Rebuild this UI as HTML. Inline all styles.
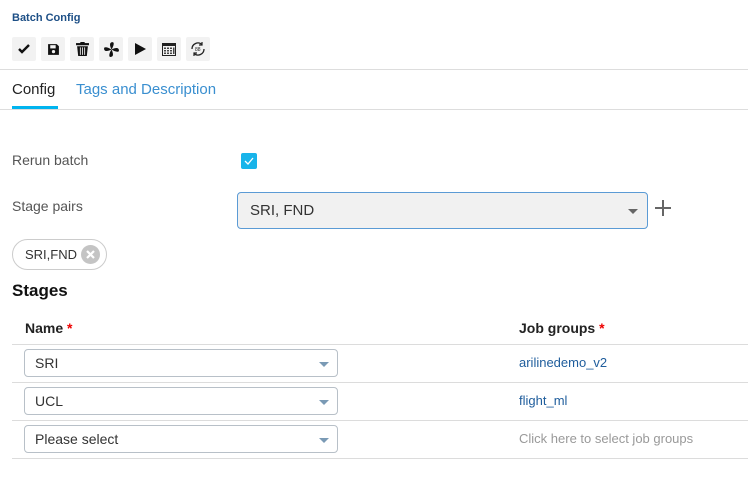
<!DOCTYPE html>
<html><head><meta charset="utf-8"><style>
*{box-sizing:border-box;margin:0;padding:0}
body{width:748px;height:478px;background:#fff;font-family:"Liberation Sans",sans-serif;position:relative;overflow:hidden;color:#333}
.a{position:absolute}
.btn{position:absolute;top:37px;width:24px;height:24px;background:#f2f2f2;border-radius:2px;display:flex;align-items:center;justify-content:center}
.hl{position:absolute;left:12px;right:0;height:1px;background:#dcdcdc}
.sel{position:absolute;left:24px;width:314px;height:28px;border:1px solid #b8c0c8;border-radius:4px;font-size:14px;padding-left:10px;line-height:26px;color:#333}
.sel:after{content:"";position:absolute;right:8px;top:12px;border-left:5px solid transparent;border-right:5px solid transparent;border-top:5px solid #7a9ab5}
.jg{position:absolute;left:519px;font-size:13px;color:#1f5d9c}
</style></head><body>
<div class="a" style="left:12px;top:12px;font-size:11px;font-weight:bold;color:#1d4f86">Batch Config</div>
<div class="btn" style="left:12px"><svg width="14" height="14" viewBox="0 0 14 14"><path d="M2 7l3 3 7-7" stroke="#111" stroke-width="2.4" fill="none"/></svg></div>
<div class="btn" style="left:41px"><svg width="13" height="13" viewBox="0 0 12 12"><path d="M1 1h8l2 2v8H1z" fill="#111"/><rect x="3" y="2" width="5" height="3" fill="#f2f2f2"/><circle cx="6" cy="8" r="1.5" fill="#f2f2f2"/></svg></div>
<div class="btn" style="left:70px"><svg width="13" height="14" viewBox="0 0 12 13"><rect x="0" y="1" width="12" height="2" fill="#111"/><rect x="4" y="0" width="4" height="2" fill="#111"/><path d="M1 4h10l-1 9H2z" fill="#111"/><path d="M4 5v7M6 5v7M8 5v7" stroke="#f2f2f2" stroke-width=".8"/></svg></div>
<div class="btn" style="left:99px"><svg width="17" height="17" viewBox="0 0 16 16"><g fill="#111"><path d="M8 8C6 4 6 1 9 1c2 0 1 4-1 7z"/><path d="M8 8c4-2 7-2 7 1 0 2-4 1-7-1z"/><path d="M8 8c2 4 2 7-1 7-2 0-1-4 1-7z"/><path d="M8 8C4 10 1 10 1 7c0-2 4-1 7 1z"/></g></svg></div>
<div class="btn" style="left:128px"><svg width="14" height="14" viewBox="0 0 14 14"><path d="M2 1l11 6-11 6z" fill="#111"/></svg></div>
<div class="btn" style="left:157px"><svg width="16" height="16" viewBox="0 0 16 16"><rect x="1.5" y="2.5" width="13" height="12" fill="none" stroke="#222"/><rect x="1.5" y="2.5" width="13" height="2.5" fill="#222"/><g fill="#444"><rect x="3" y="6.5" width="2" height="1.5"/><rect x="6" y="6.5" width="2" height="1.5"/><rect x="9" y="6.5" width="2" height="1.5"/><rect x="3" y="9" width="2" height="1.5"/><rect x="6" y="9" width="2" height="1.5"/><rect x="9" y="9" width="2" height="1.5"/><rect x="3" y="11.5" width="2" height="1.5"/><rect x="6" y="11.5" width="2" height="1.5"/><rect x="9" y="11.5" width="2" height="1.5"/><rect x="12" y="6.5" width="1.5" height="6.5"/></g></svg></div>
<div class="btn" style="left:186px"><svg width="18" height="18" viewBox="0 0 18 18"><path d="M3 9a6 6 0 0 1 10-4.5M15 9a6 6 0 0 1-10 4.5" stroke="#222" stroke-width="1.3" fill="none"/><path d="M13 2v3h-3M5 16v-3h3" stroke="#222" stroke-width="1.2" fill="none"/><text x="6" y="11" font-size="5" font-family="Liberation Sans" fill="#222">88</text></svg></div>
<div class="a" style="left:0;right:0;top:69px;height:1px;background:#ddd"></div>
<div class="a" style="left:12px;top:81px;font-size:15px;color:#222">Config</div>
<div class="a" style="left:76px;top:81px;font-size:15px;color:#3a8fd0">Tags and Description</div>
<div class="a" style="left:12px;top:106px;width:46px;height:3px;background:#00b4ef"></div>
<div class="a" style="left:0;right:0;top:109px;height:1px;background:#ddd"></div>
<div class="a" style="left:12px;top:152px;font-size:14px;color:#555">Rerun batch</div>
<div class="a" style="left:241px;top:153px;width:16px;height:16px;background:#18b4ea;border-radius:2px"><svg width="16" height="16" viewBox="0 0 16 16"><path d="M4 8l3 3 5-6" stroke="#fff" stroke-width="1.3" fill="none"/></svg></div>
<div class="a" style="left:12px;top:198px;font-size:14px;color:#555">Stage pairs</div>
<div class="a" style="left:237px;top:192px;width:411px;height:37px;background:#f1f1f1;border:1px solid #5b9bd5;border-radius:4px;font-size:15px;color:#333;padding-left:12px;line-height:35px">SRI, FND<span style="position:absolute;right:9px;top:16px;border-left:5px solid transparent;border-right:5px solid transparent;border-top:5px solid #666"></span></div>
<div class="a" style="left:655px;top:207px;width:16px;height:2px;background:#666"></div>
<div class="a" style="left:662px;top:200px;width:2px;height:16px;background:#666"></div>
<div class="a" style="left:12px;top:239px;width:95px;height:31px;border:1px solid #ccc;border-radius:16px;font-size:13px;padding-left:12px;line-height:29px;color:#333">SRI,FND<span style="position:absolute;left:68px;top:5px;width:19px;height:19px;border-radius:50%;background:#c4c4c4"><svg width="19" height="19" viewBox="0 0 19 19"><path d="M6 6l7 7M13 6l-7 7" stroke="#fff" stroke-width="2.2"/></svg></span></div>
<div class="a" style="left:12px;top:281px;font-size:17px;font-weight:bold;color:#111">Stages</div>
<div class="a" style="left:25px;top:320px;font-size:14px;font-weight:bold;color:#222">Name <span style="color:#e00">*</span></div>
<div class="a" style="left:519px;top:320px;font-size:14px;font-weight:bold;color:#222">Job groups <span style="color:#e00">*</span></div>
<div class="hl" style="top:344px"></div>
<div class="hl" style="top:382px"></div>
<div class="hl" style="top:420px"></div>
<div class="hl" style="top:458px"></div>
<div class="sel" style="top:349px">SRI</div>
<div class="sel" style="top:387px">UCL</div>
<div class="sel" style="top:425px">Please select</div>
<div class="jg" style="top:355px">arilinedemo_v2</div>
<div class="jg" style="top:393px">flight_ml</div>
<div class="jg" style="top:431px;color:#999">Click here to select job groups</div>
</body></html>
